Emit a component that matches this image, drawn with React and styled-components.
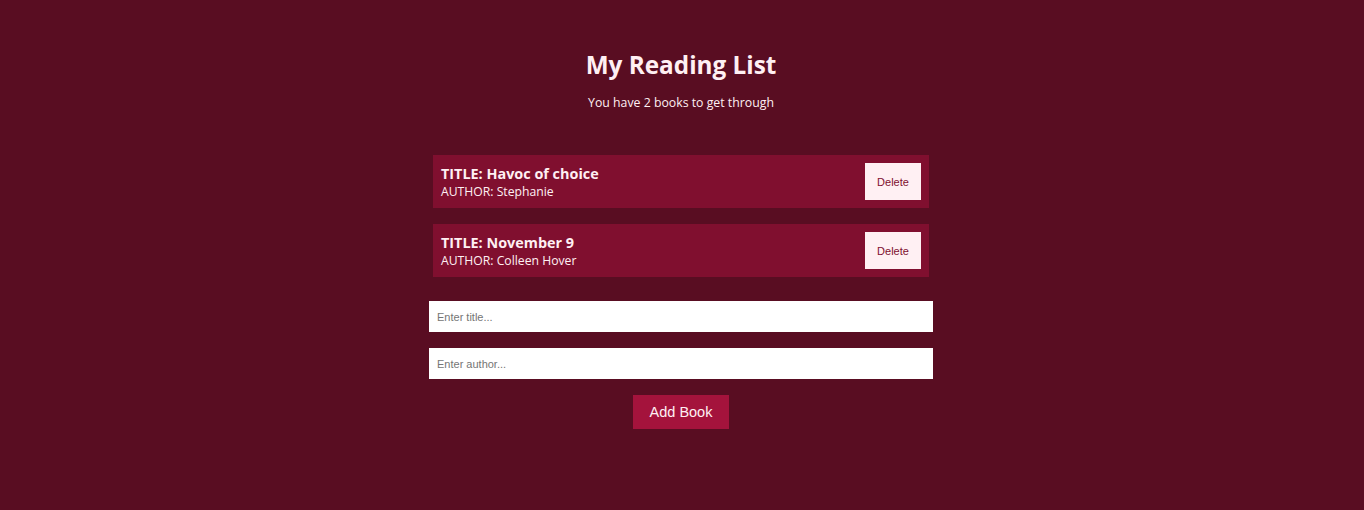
import React, { useState } from "react";
import styled, { createGlobalStyle } from "styled-components";

const GlobalStyle = createGlobalStyle`
  body {
    margin: 0;
    background: #590d22;
    font-family: "Open Sans", "Noto Sans", sans-serif;
    color: #fff0f3;
  }
`;

const Page = styled.div`
  min-height: 510px;
  display: flex;
  flex-direction: column;
  align-items: center;
  padding: 46px 2px 0 0;
  box-sizing: border-box;
`;

const Header = styled.header`
  text-align: center;
  margin-bottom: 43px;
`;

const Title = styled.h1`
  margin: 0;
  font-size: 24.3px;
  font-weight: 700;
  line-height: 38px;
`;

const Subtitle = styled.p`
  margin: 10px 0 0;
  font-size: 12.3px;
  line-height: 18px;
`;

const List = styled.ul`
  list-style: none;
  margin: 0;
  padding: 0;
  width: 496px;
  display: flex;
  flex-direction: column;
  gap: 16px;
`;

const Item = styled.li`
  background: #800f2f;
  padding: 8px;
  display: flex;
  align-items: center;
  justify-content: space-between;
`;

const BookTitle = styled.div`
  font-size: 14.4px;
  font-weight: 700;
  line-height: 21px;
`;

const BookAuthor = styled.div`
  font-size: 12.2px;
  line-height: 16px;
`;

const DeleteButton = styled.button`
  width: 56px;
  height: 37px;
  border: none;
  background: #fff0f3;
  color: #800f2f;
  font-family: "Liberation Sans", Arial, sans-serif;
  font-size: 11px;
  cursor: pointer;
`;

const Form = styled.form`
  margin-top: 24px;
  width: 504px;
  display: flex;
  flex-direction: column;
  align-items: center;
  gap: 16px;
`;

const Input = styled.input`
  width: 100%;
  height: 31px;
  box-sizing: border-box;
  border: none;
  padding: 0 8px;
  font-family: "Liberation Sans", Arial, sans-serif;
  font-size: 11px;
  outline: none;
  &::placeholder {
    color: #757575;
  }
`;

const AddButton = styled.button`
  width: 96px;
  height: 34px;
  border: none;
  background: #a4133c;
  color: #fff0f3;
  font-family: "Liberation Sans", Arial, sans-serif;
  font-size: 14.5px;
  cursor: pointer;
`;

export default function App() {
  const [books, setBooks] = useState([
    { id: 1, title: "Havoc of choice", author: "Stephanie" },
    { id: 2, title: "November 9", author: "Colleen Hover" },
  ]);
  const [title, setTitle] = useState("");
  const [author, setAuthor] = useState("");

  const addBook = (e) => {
    e.preventDefault();
    if (!title || !author) return;
    setBooks([...books, { id: Date.now(), title, author }]);
    setTitle("");
    setAuthor("");
  };

  return (
    <>
      <GlobalStyle />
      <Page>
        <Header>
          <Title>My Reading List</Title>
          <Subtitle>You have {books.length} books to get through</Subtitle>
        </Header>
        <List>
          {books.map((b) => (
            <Item key={b.id}>
              <div>
                <BookTitle>TITLE: {b.title}</BookTitle>
                <BookAuthor>AUTHOR: {b.author}</BookAuthor>
              </div>
              <DeleteButton onClick={() => setBooks(books.filter((x) => x.id !== b.id))}>
                Delete
              </DeleteButton>
            </Item>
          ))}
        </List>
        <Form onSubmit={addBook}>
          <Input placeholder="Enter title..." value={title} onChange={(e) => setTitle(e.target.value)} />
          <Input placeholder="Enter author..." value={author} onChange={(e) => setAuthor(e.target.value)} />
          <AddButton type="submit">Add Book</AddButton>
        </Form>
      </Page>
    </>
  );
}
